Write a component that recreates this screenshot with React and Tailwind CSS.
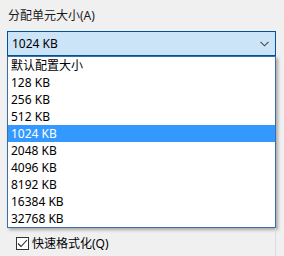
import React from "react";

const sizes = [
  "默认配置大小",
  "128 KB",
  "256 KB",
  "512 KB",
  "1024 KB",
  "2048 KB",
  "4096 KB",
  "8192 KB",
  "16384 KB",
  "32768 KB",
];

const font = { fontFamily: '"Noto Sans", "Noto Sans CJK SC", sans-serif' };

export default function App() {
  const selected = "1024 KB";

  return (
    <div
      className="w-[284px] h-[256px] bg-[#f0f0f0] overflow-hidden text-[12px] text-black"
      style={font}
    >
      {/* label */}
      <div className="pl-[8px] pt-[8px] h-[31px] leading-[16px] text-[#1a1a1a]">分配单元大小(A)</div>

      {/* combo box */}
      <div className="ml-[7px] w-[269px] h-[25px] bg-[#cce4f7] border border-[#005499] flex items-center justify-between pl-[4px] pr-[6px]">
        <span className="leading-[16px]">1024 KB</span>
        <svg width="9" height="6" viewBox="0 0 9 6" className="mt-[1px]">
          <path d="M0.5 0.8 L4.5 4.8 L8.5 0.8" fill="none" stroke="#4a4a4a" strokeWidth="1.1" />
        </svg>
      </div>

      {/* dropdown list */}
      <div className="ml-[7px] w-[269px] bg-white border border-[#3a6ea5] shadow-[2px_2px_3px_rgba(0,0,0,0.3)] flex flex-col">
        {sizes.map((s) => (
          <div
            key={s}
            className={
              s === selected
                ? "h-[17px] leading-[17px] pl-[3px] bg-[#3399ff] text-white"
                : "h-[17px] leading-[17px] pl-[3px] text-black"
            }
          >
            {s}
          </div>
        ))}
      </div>

      {/* quick format */}
      <div className="w-[276px] border-r border-[#dcdcdc] h-[40px] pt-[9px] pl-[16px] flex items-start gap-[3px]">
        <div className="w-[13px] h-[13px] border border-[#333] bg-white flex items-center justify-center">
          <svg width="11" height="9" viewBox="0 0 11 9">
            <path d="M1 4.5 L4 7.5 L10 1" fill="none" stroke="#222" strokeWidth="1.1" />
          </svg>
        </div>
        <span className="leading-[14px]">快速格式化(Q)</span>
      </div>
    </div>
  );
}
